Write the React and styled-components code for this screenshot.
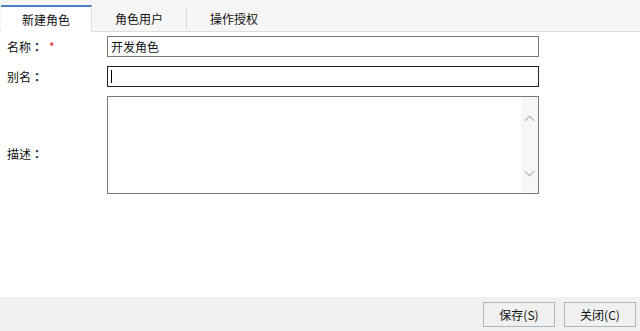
import styled, { createGlobalStyle } from 'styled-components'

const GlobalStyle = createGlobalStyle`
  html, body {
    margin: 0;
    padding: 0;
    background: #fff;
  }
  body {
    font-family: 'Microsoft YaHei', 'Noto Sans CJK SC', 'Noto Sans', sans-serif;
    font-size: 12px;
    color: #1a1a1a;
  }
`

function App() {
  return (
    <>
      <GlobalStyle />
      <Page>
        <TabBar>
          <Tab $active>新建角色</Tab>
          <Tab>角色用户</Tab>
          <Divider />
          <Tab>操作授权</Tab>
        </TabBar>

        <Form>
          <Label>名称<Colon>：</Colon><Required>*</Required></Label>
          <TextInput defaultValue="开发角色" />

          <Label>别名<Colon>：</Colon></Label>
          <InputWrap>
            <TextInput $focused />
            <Caret />
          </InputWrap>

          <Label $top>描述<Colon>：</Colon></Label>
          <AreaBox>
            <Area />
            <ScrollTrack>
              <Chevron viewBox="0 0 12 8">
                <path d="M1 7 L6 2 L11 7" />
              </Chevron>
              <Chevron viewBox="0 0 12 8">
                <path d="M1 1 L6 6 L11 1" />
              </Chevron>
            </ScrollTrack>
          </AreaBox>
        </Form>

        <Footer>
          <Button>保存(S)</Button>
          <Button>关闭(C)</Button>
        </Footer>
      </Page>
    </>
  )
}

export default App

const Page = styled.div`
  height: 331px;
  display: flex;
  flex-direction: column;
  overflow: hidden;
`

const TabBar = styled.div`
  height: 31px;
  flex: none;
  display: flex;
  align-items: flex-end;
  background: #f6f6f6;
  border-bottom: 1px solid #dcdcdc;
  padding-left: 1px;
`

const Tab = styled.div`
  box-sizing: border-box;
  height: ${p => (p.$active ? '27px' : '25px')};
  margin-bottom: ${p => (p.$active ? '-1px' : '0')};
  width: ${p => (p.$active ? '91px' : '94px')};
  display: flex;
  align-items: center;
  justify-content: center;
  background: ${p => (p.$active ? '#fff' : 'transparent')};
  border-top: ${p => (p.$active ? '2px solid #4a80c0' : 'none')};
  border-right: ${p => (p.$active ? '1px solid #dcdcdc' : 'none')};
  color: #111;
  cursor: pointer;
`

const Divider = styled.div`
  width: 1px;
  height: 20px;
  margin-bottom: 2px;
  background: #d6d6d6;
`

const Form = styled.div`
  flex: 1;
  display: grid;
  grid-template-columns: 100px 432px;
  grid-auto-rows: min-content;
  row-gap: 9px;
  padding: 4px 0 0 7px;
`

const Label = styled.div`
  display: flex;
  align-items: ${p => (p.$top ? 'flex-start' : 'center')};
  padding-top: ${p => (p.$top ? '49px' : '0')};
  color: #111;
`

const Colon = styled.span`
  font-family: 'Noto Sans CJK JP', sans-serif;
  font-weight: bold;
  color: #1b3a5c;
`

const Required = styled.span`
  color: #e0202a;
  margin-left: 6px;
`

const InputWrap = styled.div`
  position: relative;
  display: flex;
`

const Caret = styled.span`
  position: absolute;
  left: 4px;
  top: 4px;
  width: 1px;
  height: 13px;
  background: #000;
`

const TextInput = styled.input`
  box-sizing: border-box;
  height: 21px;
  width: 100%;
  margin: 0;
  padding: 0 3px;
  border: 1px solid ${p => (p.$focused ? '#222' : '#7a7a7a')};
  outline: none;
  font: inherit;
  color: #111;
  background: #fff;
`

const AreaBox = styled.div`
  box-sizing: border-box;
  height: 98px;
  display: flex;
  border: 1px solid #7a7a7a;
  background: #fff;
`

const Area = styled.textarea`
  flex: 1;
  border: none;
  outline: none;
  resize: none;
  padding: 3px;
  font: inherit;
`

const ScrollTrack = styled.div`
  width: 17px;
  background: #f7f7f7;
  display: flex;
  flex-direction: column;
  align-items: center;
  justify-content: space-between;
  padding: 17px 0 15px;
`

const Chevron = styled.svg`
  width: 11px;
  height: 8px;
  fill: none;
  stroke: #bdbdbd;
  stroke-width: 1.6;
`

const Footer = styled.div`
  height: 34px;
  flex: none;
  display: flex;
  justify-content: flex-end;
  align-items: center;
  gap: 9px;
  padding-right: 4px;
  background: #f0f0f0;
`

const Button = styled.button`
  box-sizing: border-box;
  width: 72px;
  height: 25px;
  margin-top: 1px;
  border: 1px solid #aab6c3;
  background: #f0f0f0;
  font: inherit;
  color: #111;
  cursor: pointer;
`
